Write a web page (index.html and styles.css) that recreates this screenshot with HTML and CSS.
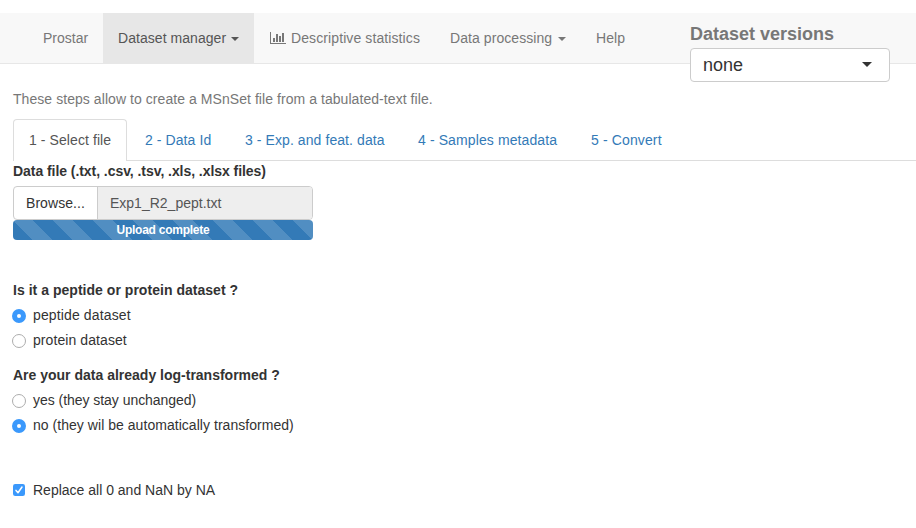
FILE: index.html
```html
<!DOCTYPE html>
<html lang="en">
<head>
<meta charset="utf-8">
<title>Prostar</title>
<link rel="stylesheet" href="styles.css">
</head>
<body>
<nav class="navbar">
  <a class="nav-item brand"><span>Prostar</span></a>
  <a class="nav-item manager active"><span>Dataset manager</span><i class="caret"></i></a>
  <a class="nav-item stats">
    <svg class="chart" width="16" height="12" viewBox="0 0 16 12" fill="currentColor" shape-rendering="crispEdges"><path d="M0 0h1v11h15v1H0zM3 6h2v4H3zM6 2h2v8H6zM9 4h2v6H9zM12 1h2v9h-2z"/></svg>
    <span>Descriptive statistics</span>
  </a>
  <a class="nav-item processing"><span>Data processing</span><i class="caret"></i></a>
  <a class="nav-item help"><span>Help</span></a>
  <div class="versions">
    <div class="versions-title"><span>Dataset versions</span></div>
    <div class="select"><span>none</span><i class="caret large"></i></div>
  </div>
</nav>
<main class="content">
  <p class="intro"><span>These steps allow to create a MSnSet file from a tabulated-text file.</span></p>
  <ul class="tabs">
    <li class="tab selected"><span>1 - Select file</span></li>
    <li class="tab tab-id"><span>2 - Data Id</span></li>
    <li class="tab tab-exp"><span>3 - Exp. and feat. data</span></li>
    <li class="tab tab-meta"><span>4 - Samples metadata</span></li>
    <li class="tab tab-convert"><span>5 - Convert</span></li>
  </ul>
  <div class="label file-label"><span>Data file (.txt, .csv, .tsv, .xls, .xlsx files)</span></div>
  <div class="file-input">
    <div class="browse"><span>Browse...</span></div>
    <div class="filename"><span>Exp1_R2_pept.txt</span></div>
  </div>
  <div class="progress"><span>Upload complete</span></div>
  <div class="group kind">
    <div class="label kind-label"><span>Is it a peptide or protein dataset ?</span></div>
    <div class="option"><i class="radio checked"></i><span class="o-pep">peptide dataset</span></div>
    <div class="option"><i class="radio"></i><span class="o-prot">protein dataset</span></div>
  </div>
  <div class="group">
    <div class="label log-label"><span>Are your data already log-transformed ?</span></div>
    <div class="option"><i class="radio"></i><span class="o-yes">yes (they stay unchanged)</span></div>
    <div class="option"><i class="radio checked"></i><span class="o-no">no (they wil be automatically transformed)</span></div>
  </div>
  <div class="option replace">
    <svg class="checkbox" width="12" height="12" viewBox="0 0 12 12"><rect width="12" height="12" rx="2.2" fill="#3b99fc"/><path d="M3 6.4l2 2.3L9 3" fill="none" stroke="#fff" stroke-width="1.5" stroke-linecap="round" stroke-linejoin="round"/></svg>
    <span class="o-na">Replace all 0 and NaN by NA</span>
  </div>
</main>
</body>
</html>
```
FILE: styles.css
```css
* { box-sizing: border-box; }
body {
  margin: 0;
  padding-top: 13px;
  background: #fff;
  color: #333;
  font: 14px/20px "Liberation Sans", Arial, sans-serif;
  overflow: hidden;
}
span { white-space: nowrap; }
.navbar {
  display: flex;
  height: 51px;
  padding-left: 28px;
  background: #f8f8f8;
  border-bottom: 1px solid #e7e7e7;
  color: #777;
}
.nav-item {
  display: flex;
  align-items: center;
  height: 51px;
  padding: 0 15px 1px;
}
.brand { width: 75px; }
.manager { width: 151px; letter-spacing: .05px; }
.stats { width: 181px; padding-left: 16px; letter-spacing: .1px; }
.processing { width: 146px; letter-spacing: .07px; }
.help { width: 60px; letter-spacing: .1px; }
.active { background: #e7e7e7; color: #555; }
.chart { margin-right: 5px; flex: none; }
.caret {
  flex: none;
  margin-left: auto;
  border-top: 4px solid;
  border-left: 4px solid transparent;
  border-right: 4px solid transparent;
  margin-top: 2px;
}
.versions { width: 200px; margin-left: 49px; padding-top: 8px; }
.versions-title { height: 27px; font-size: 18px; line-height: 26px; font-weight: bold; }
.select {
  display: flex;
  align-items: center;
  height: 34px;
  padding: 0 17px 0 12px;
  background: #fff;
  border: 1px solid #ccc;
  border-radius: 4px;
  color: #333;
  font-size: 18px;
}
.large { border-width: 5px 5px 0; margin-top: -1px; }
.content { padding: 25px 0 0 13px; }
.intro { margin: 0 0 10px; color: #777; letter-spacing: .06px; }
.tabs {
  display: flex;
  height: 42px;
  margin: 0;
  padding: 0;
  list-style: none;
  border-bottom: 1px solid #ddd;
}
.tab { height: 42px; padding: 11px 0 0 16px; color: #337ab7; letter-spacing: .08px; }
.selected {
  width: 114px;
  margin-right: 2px;
  padding-left: 15px;
  background: #fff;
  border: 1px solid #ddd;
  border-bottom: 0;
  border-radius: 4px 4px 0 0;
  color: #555;
  padding-top: 10px;
}
.tab-id { width: 100px; }
.tab-exp { width: 173px; }
.tab-meta { width: 173px; letter-spacing: .11px; }
.tab-convert { letter-spacing: .13px; }
.label { font-weight: bold; height: 25px; }
.file-label { letter-spacing: -.055px; }
.kind-label { letter-spacing: .03px; }
.file-input {
  display: flex;
  width: 300px;
  height: 34px;
  border: 1px solid #ccc;
  border-radius: 4px;
  overflow: hidden;
  line-height: 32px;
}
.browse { width: 84px; padding-left: 12px; border-right: 1px solid #ccc; letter-spacing: .06px; }
.filename { flex: 1; padding-left: 12px; background: #eee; color: #555; }
.progress {
  width: 300px;
  height: 20px;
  border-radius: 4px;
  background: #337ab7 linear-gradient(45deg, rgba(255,255,255,.15) 25%, transparent 25%, transparent 50%, rgba(255,255,255,.15) 50%, rgba(255,255,255,.15) 75%, transparent 75%) 0 0 / 40px 40px;
  color: #fff;
  font-size: 12px;
  font-weight: bold;
  text-align: center;
  letter-spacing: -.25px;
}
.kind { margin-top: 40px; }
.group { height: 85px; }
.option { display: flex; align-items: center; height: 20px; margin-bottom: 5px; }
.o-pep { letter-spacing: .13px; }
.o-prot { letter-spacing: .08px; }
.o-yes { letter-spacing: -.04px; }
.o-no { letter-spacing: .04px; }
.radio {
  width: 14px;
  height: 14px;
  margin: 2px 7px 0 -1px;
  border: 1px solid #adadad;
  border-radius: 50%;
  background: #fff;
}
.checked { border: 5px solid #3b99fc; }
.replace { margin-top: 30px; }
.checkbox { margin-right: 8px; }
```
